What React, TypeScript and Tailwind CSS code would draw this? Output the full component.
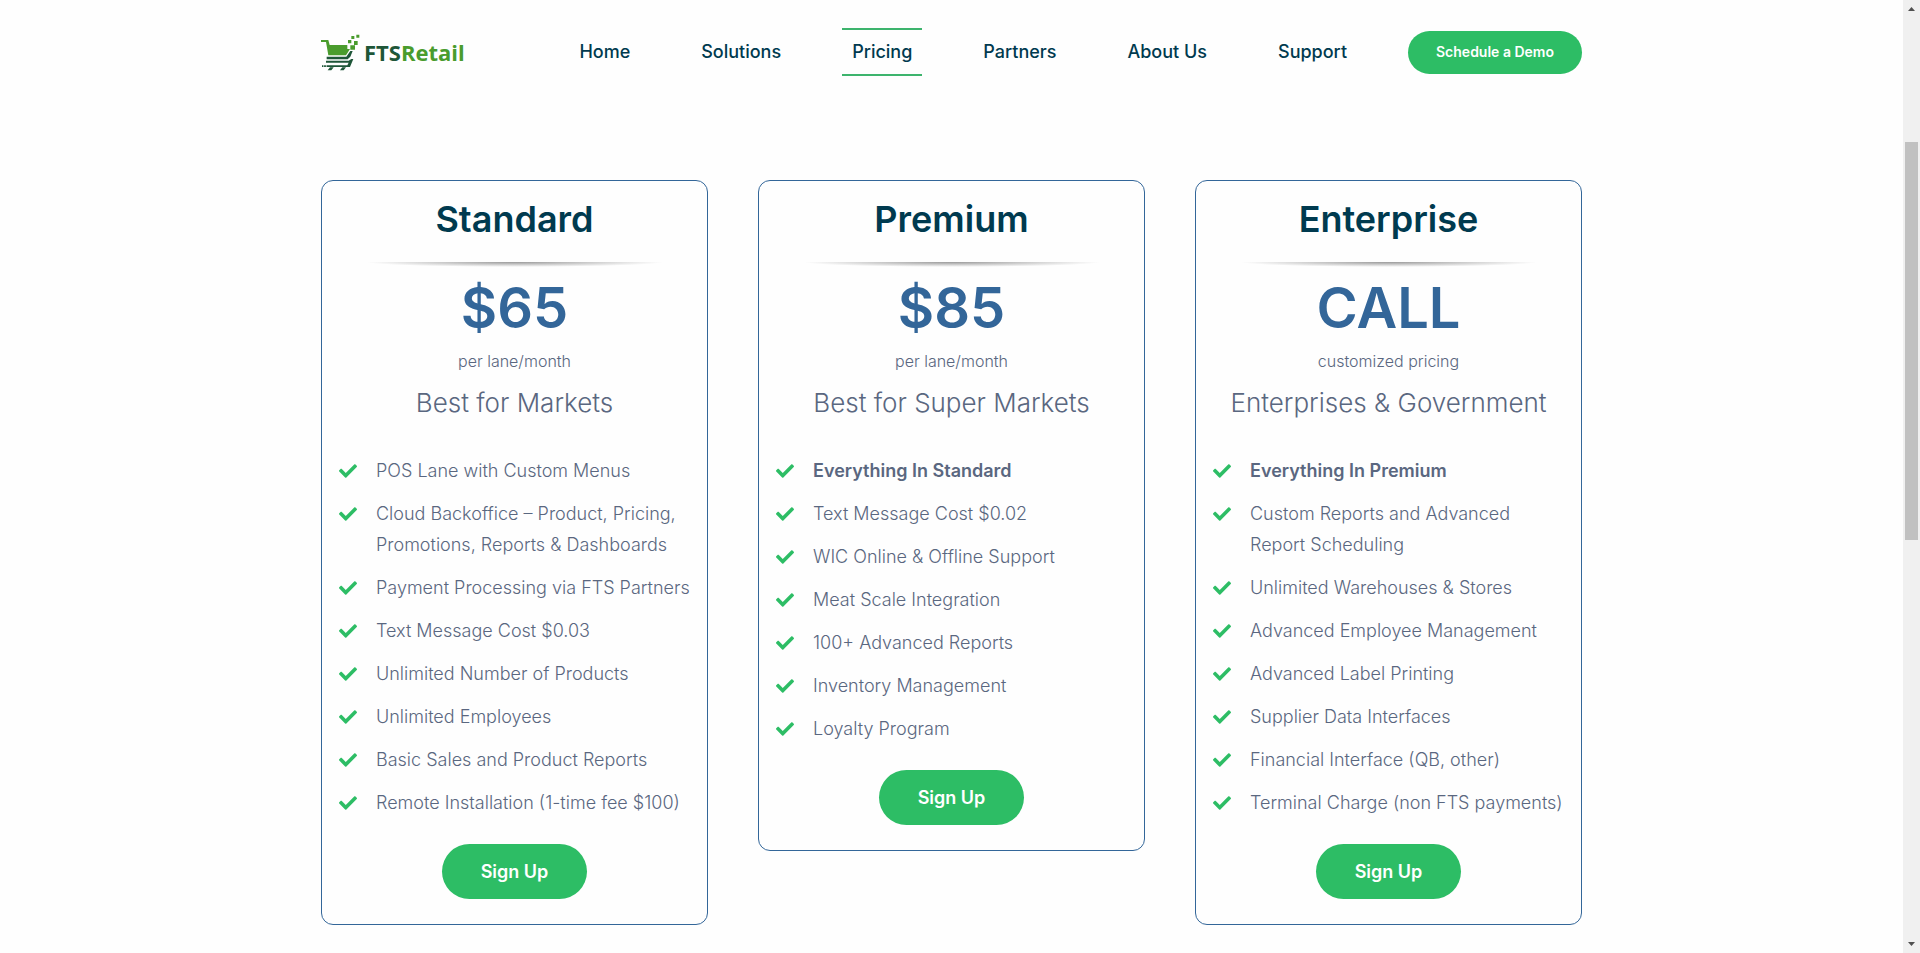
import { FaCheck } from 'react-icons/fa';

type Plan = {
  name: string;
  price: string;
  unit: string;
  audience: string;
  lead?: string;
  features: string[];
};

const navItems = ['Home', 'Solutions', 'Pricing', 'Partners', 'About Us', 'Support'];

const plans: Plan[] = [
  {
    name: 'Standard',
    price: '$65',
    unit: 'per lane/month',
    audience: 'Best for Markets',
    features: [
      'POS Lane with Custom Menus',
      'Cloud Backoffice – Product, Pricing, Promotions, Reports & Dashboards',
      'Payment Processing via FTS Partners',
      'Text Message Cost $0.03',
      'Unlimited Number of Products',
      'Unlimited Employees',
      'Basic Sales and Product Reports',
      'Remote Installation (1-time fee $100)',
    ],
  },
  {
    name: 'Premium',
    price: '$85',
    unit: 'per lane/month',
    audience: 'Best for Super Markets',
    lead: 'Everything In Standard',
    features: [
      'Text Message Cost $0.02',
      'WIC Online & Offline Support',
      'Meat Scale Integration',
      '100+ Advanced Reports',
      'Inventory Management',
      'Loyalty Program',
    ],
  },
  {
    name: 'Enterprise',
    price: 'CALL',
    unit: 'customized pricing',
    audience: 'Enterprises & Government',
    lead: 'Everything In Premium',
    features: [
      'Custom Reports and Advanced Report Scheduling',
      'Unlimited Warehouses & Stores',
      'Advanced Employee Management',
      'Advanced Label Printing',
      'Supplier Data Interfaces',
      'Financial Interface (QB, other)',
      'Terminal Charge (non FTS payments)',
    ],
  },
];

const Logo = () => (
  <a href="#home" className="flex items-center gap-[3px]" aria-label="FTSRetail">
    <svg viewBox="9 9 120 111" className="h-[37px] w-10" aria-hidden="true">
      <g fill="#4a9c2d">
        <path d="M9 27h22l4 15h53v12h8l-12 19H31L24 33H9z" />
        <path d="M100 15h9v9h-9zM115 11h9v9h-9zM90 27h10v10H90zM108 30h11v12h-11zM97 43h14v13H97z" />
      </g>
      <g fill="#1e5638">
        <path d="M26 77h59l12-17h7l-7 17-8 8H26z" />
        <path d="M24 89h68l8-5h6l-10 24H12v-5h76l4-8H24z" />
        <path d="M36 109h11l-7 9H29zM73 109h11l-7 9H66z" />
      </g>
      <path d="M17 102v7M25 102v7" stroke="#fff" strokeWidth="2" />
    </svg>
    <span className="font-['Open_Sans'] text-[22px] leading-6 font-bold text-[#1e5638]">
      FTS<span className="text-[#4a9c2d]">Retail</span>
    </span>
  </a>
);

const Header = () => (
  <header className="flex items-center justify-between">
    <Logo />
    <nav className="flex items-center gap-[51px]">
      {navItems.map((item) => (
        <a
          key={item}
          href="#pricing"
          className={`border-y-2 px-2.5 py-2 text-[18px] leading-7 font-medium text-[#003a4f] ${
            item === 'Pricing' ? 'border-[#3db46d]' : 'border-transparent'
          }`}
        >
          {item}
        </a>
      ))}
      <button className="h-[43px] rounded-full bg-[#2dbd65] px-7 text-sm font-semibold text-white">
        Schedule a Demo
      </button>
    </nav>
  </header>
);

const Feature = ({ text, bold }: { text: string; bold?: boolean }) => (
  <li className="flex gap-[19px]">
    <FaCheck size={18} className="mt-[7px] shrink-0 text-[#2dbd65]" />
    <span className={bold ? 'font-semibold' : undefined}>{text}</span>
  </li>
);

const PlanCard = ({ plan }: { plan: Plan }) => (
  <section className="flex flex-col items-center rounded-xl border border-[#336699] px-3.5 pt-3.5 pb-[25px] text-[#5a6780]">
    <h2 className="text-[36px] leading-[48px] font-semibold text-[#003a4f]">{plan.name}</h2>
    {/* shadow style divider, darkest in the middle */}
    <div className="mt-[19px] h-[5px] w-[300px] max-w-full bg-[radial-gradient(ellipse_at_top,#999999,transparent_70%)]" />
    <p className="mt-[11px] text-[56px] leading-[60px] font-semibold text-[#336699]">{plan.price}</p>
    <p className="mt-[11px] text-base leading-6 font-light">{plan.unit}</p>
    <p className="mt-[13px] text-[26px] leading-[34px] font-light">{plan.audience}</p>
    <ul className="mt-[35px] flex w-full flex-col gap-3 pl-[3px] text-[18px] leading-[31px] font-light">
      {plan.lead && <Feature text={plan.lead} bold />}
      {plan.features.map((feature) => (
        <Feature key={feature} text={feature} />
      ))}
    </ul>
    <button className="mt-[26px] h-[55px] rounded-full bg-[#2dbd65] px-[39px] text-[18px] font-semibold text-white">
      Sign Up
    </button>
  </section>
);

const Scrollbar = () => (
  <div className="sticky top-0 flex h-screen w-[17px] shrink-0 flex-col items-center bg-[#f0f0f0]" aria-hidden="true">
    <svg viewBox="0 0 17 17" className="h-[17px] w-[17px]">
      <path d="M5 11h7L8.500 7z" fill="#505050" />
    </svg>
    <div className="h-[125px]" />
    <div className="h-[398px] w-[13px] bg-[#c1c1c1]" />
    <svg viewBox="0 0 17 17" className="mt-auto h-[17px] w-[17px]">
      <path d="M5 6h7l-3.500 4z" fill="#505050" />
    </svg>
  </div>
);

const App = () => (
  <div className="flex min-h-screen bg-[#fefefe] font-['Inter',sans-serif]">
    <div className="flex-1">
      <div className="mx-auto max-w-[1261px] pt-7 pb-7">
        <Header />
        <main className="mt-[104px] grid grid-cols-3 items-start gap-[50px]">
          {plans.map((plan) => (
            <PlanCard key={plan.name} plan={plan} />
          ))}
        </main>
      </div>
    </div>
    <Scrollbar />
  </div>
);

export default App;
